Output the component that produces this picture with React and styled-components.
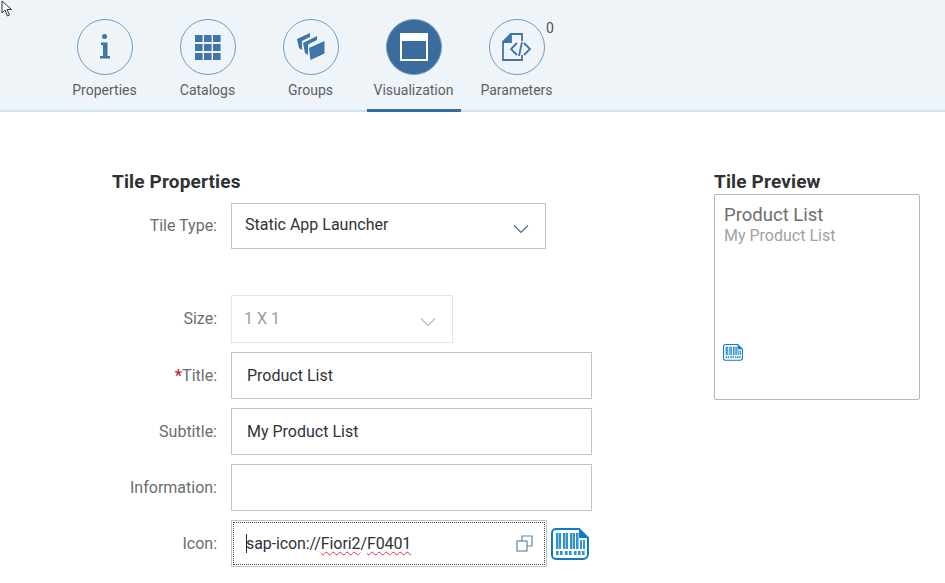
import React from "react";
import styled, { createGlobalStyle } from "styled-components";

const Global = createGlobalStyle`
  html, body { margin: 0; padding: 0; background: #fff; overflow: hidden; }
  body { font-family: Roboto, "Liberation Sans", sans-serif; }
`;

const Page = styled.div`
  position: relative;
  width: 945px;
  height: 583px;
  overflow: hidden;
  background: #fff;
`;

const Header = styled.header`
  display: flex;
  height: 110px;
  padding-left: 58px;
  background: #eff4f9;
  border-bottom: 2px solid #d3e2ef;
`;

const Tab = styled.div`
  position: relative;
  box-sizing: border-box;
  width: 94px;
  height: 112px;
  margin-right: 9px;
  padding-top: 19px;
  display: flex;
  flex-direction: column;
  align-items: center;
  border-bottom: 3px solid ${(p) => (p.$active ? "#346e9c" : "transparent")};
`;

const Circle = styled.div`
  box-sizing: border-box;
  width: 56px;
  height: 56px;
  border-radius: 50%;
  display: flex;
  align-items: center;
  justify-content: center;
  border: 1.5px solid #6d9cc3;
  background: ${(p) => (p.$active ? "#3a6d9b" : "transparent")};
`;

const TabLabel = styled.span`
  margin-top: 6px;
  margin-left: -1px;
  font-size: 14px;
  line-height: 18px;
  white-space: nowrap;
  color: #5b5f63;
`;

const Count = styled.span`
  position: absolute;
  top: 20px;
  left: 76px;
  font-size: 14px;
  line-height: 16px;
  color: #4d4f52;
`;

const Body = styled.main`
  display: flex;
  padding: 60px 0 0 0;
`;

const Left = styled.section`
  width: 714px;
  flex: none;
`;

const Heading = styled.h2`
  margin: 0;
  font-size: 19px;
  line-height: 20px;
  font-weight: 700;
  letter-spacing: 0.15px;
  color: #2f3235;
`;

const LeftHeading = styled(Heading)`
  margin-left: 112px;
  margin-bottom: 11px;
`;

const Row = styled.div`
  display: flex;
  align-items: center;
  height: ${(p) => p.$h}px;
  margin-bottom: ${(p) => p.$mb}px;
`;

const Label = styled.label`
  box-sizing: border-box;
  width: 217px;
  margin-right: 14px;
  margin-top: ${(p) => p.$up ?? 0}px;
  text-align: right;
  font-size: 16px;
  color: #6a6d70;
  flex: none;
`;

const Star = styled.span`
  color: #b5302c;
  font-weight: 700;
`;

const Field = styled.div`
  position: relative;
  box-sizing: border-box;
  display: flex;
  align-items: center;
  justify-content: space-between;
  width: ${(p) => p.$w}px;
  height: 100%;
  padding: 0 ${(p) => p.$pr ?? 15}px 0 ${(p) => p.$pl ?? 15}px;
  border: 1px solid ${(p) => (p.$disabled ? "#e5e5e5" : "#bfc4c9")};
  font-size: 16px;
  color: ${(p) => (p.$disabled ? "#9a9b9d" : "#303336")};
  background: #fff;
`;

const FieldText = styled.span`
  margin-top: ${(p) => p.$up ?? 0}px;
`;

const FocusRing = styled.span`
  position: absolute;
  inset: 1px;
  border: 1px dotted #4a4a4a;
  pointer-events: none;
`;

const Caret = styled.span`
  display: inline-block;
  width: 1px;
  height: 19px;
  margin: 0 -1px -4px 0;
  background: #222;
`;

const Squiggle = styled.span`
  text-decoration: underline wavy #e0333a 1px;
  text-underline-offset: 2px;
`;

const IconValue = styled.span`
  letter-spacing: -0.1px;
`;

const Right = styled.aside`
  width: 206px;
  flex: none;
`;

const PreviewHeading = styled(Heading)`
  margin-bottom: 2px;
`;

const TileBox = styled.div`
  box-sizing: border-box;
  width: 206px;
  height: 206px;
  padding: 10px 9px;
  display: flex;
  flex-direction: column;
  border: 1px solid #b5b7b9;
  border-radius: 2px;
`;

const TileTitle = styled.div`
  font-size: 18.5px;
  line-height: 21px;
  color: #6a6d70;
`;

const TileSubtitle = styled.div`
  font-size: 16px;
  line-height: 20px;
  color: #a0a2a4;
`;

const TileIcon = styled.div`
  margin: 98px 0 0 -1px;
  line-height: 0;
`;

const Trailing = styled.div`
  margin-left: 4px;
  line-height: 0;
`;

const Pointer = styled.svg`
  position: absolute;
  left: 1px;
  top: 0;
`;

const Chevron = ({ color }) => (
  <svg width="16" height="10" viewBox="0 0 16 10" fill="none" style={{ marginTop: 5 }}>
    <path d="M1 1.5 8 8.500 15 1.500" stroke={color} strokeWidth="1.2" />
  </svg>
);

const InfoIcon = () => (
  <svg width="16" height="28" viewBox="0 0 16 28" fill="#3f76a7">
    <circle cx="7.500" cy="3.500" r="2.500" />
    <path d="M4 9.500h6.500V23H13v2.500H3V23h3V12H4z" />
  </svg>
);

const GridIcon = () => (
  <svg width="26" height="25" viewBox="0 0 26 25" fill="#3f76a7">
    {[0, 9, 18].flatMap((y) =>
      [0, 9, 18].map((x) => <rect key={`${x}-${y}`} x={x} y={y} width="7.6" height="7" />)
    )}
  </svg>
);

const GroupsIcon = () => (
  <svg width="28" height="28" viewBox="0 0 28 28" fill="#3f76a7">
    <path d="M0 6 13 0v4L5 8v9l-3-2z" />
    <path d="M6 10 20 3v4l-9 4.500V22l-3-2z" />
    <path d="M12 15 27.500 8v12.500L13.500 27z" />
  </svg>
);

const WindowIcon = () => (
  <svg width="28" height="28" viewBox="0 0 28 28">
    <rect x="1" y="1" width="26" height="26" fill="none" stroke="#fff" strokeWidth="2" />
    <rect x="1" y="1" width="26" height="7" fill="#fff" />
  </svg>
);

const ParamIcon = () => (
  <svg width="30" height="28" viewBox="0 0 30 28" fill="none" stroke="#3f76a7" strokeWidth="1.800">
    <path d="M20 8V1H9L1 9v18h19v-5" />
    <path d="M9 1v8H1z" fill="#3f76a7" />
    <path d="M15 10 9 16l6 6M22 10l6 6-6 6M20 9l-3 14" />
  </svg>
);

const CopyIcon = () => (
  <svg width="17" height="17" viewBox="0 0 17 17" fill="none" stroke="#5f87a8" strokeWidth="1.2">
    <rect x="1" y="6" width="10" height="10" />
    <path d="M6 6V1h10v10h-5" />
  </svg>
);

const BarcodeIcon = ({ size }) => (
  <svg width={size} height={(size * 32) / 38} viewBox="0 0 38 32">
    <path d="M5 1h23l9 9v16a5 5 0 0 1-5 5H5a4 4 0 0 1-4-4V5a4 4 0 0 1 4-4z" fill="#fff" stroke="#0f7cc0" strokeWidth="2" />
    <path d="M28 1v9h9z" fill="#0f7cc0" />
    <g fill="#2e93d1">
      {[5, 8, 12, 15, 19, 22, 25].map((x, i) => (
        <rect key={x} x={x} y="5" width={i % 2 ? 2 : 2.5} height="16" />
      ))}
      <rect x="29" y="12" width="2" height="9" />
      <rect x="32" y="12" width="2" height="9" />
      {[5, 9, 14, 18, 23, 27, 31].map((x) => (
        <rect key={x} x={x} y="23" width="2.6" height="4" />
      ))}
    </g>
  </svg>
);

const tabs = [
  { label: "Properties", icon: <InfoIcon /> },
  { label: "Catalogs", icon: <GridIcon /> },
  { label: "Groups", icon: <GroupsIcon /> },
  { label: "Visualization", icon: <WindowIcon />, active: true },
  { label: "Parameters", icon: <ParamIcon />, count: 0 },
];

export default function App() {
  return (
    <Page>
      <Global />
      <Header>
        {tabs.map((t) => (
          <Tab key={t.label} $active={t.active}>
            <Circle $active={t.active}>{t.icon}</Circle>
            <TabLabel>{t.label}</TabLabel>
            {t.count !== undefined && <Count>{t.count}</Count>}
          </Tab>
        ))}
      </Header>
      <Body>
        <Left>
          <LeftHeading>Tile Properties</LeftHeading>
          <Row $h={46} $mb={46}>
            <Label $up={-2}>Tile Type:</Label>
            <Field $w={315} $pl={13} $pr={16}>
              <FieldText $up={-3}>Static App Launcher</FieldText>
              <Chevron color="#3f6f99" />
            </Field>
          </Row>
          <Row $h={48} $mb={9}>
            <Label $up={-1}>Size:</Label>
            <Field $w={222} $pl={12} $pr={16} $disabled>
              <FieldText $up={-2}>1 X 1</FieldText>
              <Chevron color="#a9bfd2" />
            </Field>
          </Row>
          <Row $h={47} $mb={9}>
            <Label>
              <Star>*</Star>Title:
            </Label>
            <Field $w={361}>Product List</Field>
          </Row>
          <Row $h={47} $mb={9}>
            <Label>Subtitle:</Label>
            <Field $w={361}>My Product List</Field>
          </Row>
          <Row $h={47} $mb={9}>
            <Label>Information:</Label>
            <Field $w={361} />
          </Row>
          <Row $h={47} $mb={0}>
            <Label>Icon:</Label>
            <Field $w={316} $pr={13} $pl={14}>
              <FocusRing />
              <IconValue>
                <Caret />
                sap-icon://<Squiggle>Fiori2</Squiggle>/<Squiggle>F0401</Squiggle>
              </IconValue>
              <CopyIcon />
            </Field>
            <Trailing>
              <BarcodeIcon size={38} />
            </Trailing>
          </Row>
        </Left>
        <Right>
          <PreviewHeading>Tile Preview</PreviewHeading>
          <TileBox>
            <TileTitle>Product List</TileTitle>
            <TileSubtitle>My Product List</TileSubtitle>
            <TileIcon>
              <BarcodeIcon size={20} />
            </TileIcon>
          </TileBox>
        </Right>
      </Body>
      <Pointer width="14" height="18" viewBox="0 0 14 18" fill="#fff" stroke="#333" strokeWidth="1">
        <path d="M1 1v12l3-3 2.500 6 2-1-2.500-5.500h4.500z" />
      </Pointer>
    </Page>
  );
}
